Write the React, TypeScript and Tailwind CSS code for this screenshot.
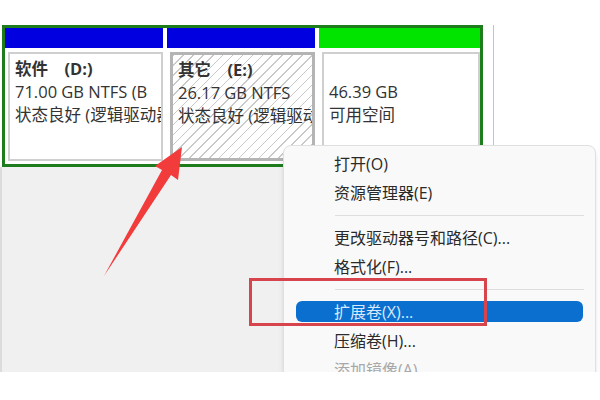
import React from 'react';

type Item = { label: string; sep?: boolean; active?: boolean; disabled?: boolean };

const menu: Item[] = [
  { label: '打开(O)' },
  { label: '资源管理器(E)' },
  { label: '', sep: true },
  { label: '更改驱动器号和路径(C)...' },
  { label: '格式化(F)...' },
  { label: '', sep: true },
  { label: '扩展卷(X)...', active: true },
  { label: '压缩卷(H)...' },
  { label: '添加镜像(A)', disabled: true },
];

function Partition({
  width,
  header,
  lines,
  hatched,
  selected,
}: {
  width: string;
  header: string;
  lines: { text: string; bold?: boolean }[];
  hatched?: boolean;
  selected?: boolean;
}) {
  return (
    <div className={`flex flex-col ${width}`}>
      <div className={`h-[20px] ${header}`} />
      <div className="flex-1 bg-white pt-[4px] pl-[3px] pb-[3px]">
        <div
          className={`h-full overflow-hidden pl-[5px] pt-[3px] ${
            selected ? 'border-[3px] border-[#b4b4b4]' : 'border-2 border-[#cfcfcf]'
          } ${
            hatched
              ? 'bg-[image:repeating-linear-gradient(135deg,#c9c9c9_0px,#c9c9c9_1px,#ffffff_1px,#ffffff_7px)]'
              : 'bg-white'
          }`}
        >
          {lines.map((l, i) => (
            <div
              key={i}
              className={`whitespace-pre h-[23px] leading-[23px] text-[16.5px] text-[#333] ${
                l.bold ? 'font-bold' : ''
              }`}
            >
              {l.text}
            </div>
          ))}
        </div>
      </div>
    </div>
  );
}

export default function App() {
  return (
    <div
      className="relative w-[600px] h-[400px] bg-white overflow-hidden"
      style={{ fontFamily: '"Open Sans", "Noto Sans CJK SC", sans-serif' }}
    >
      <div className="relative h-[372px] overflow-hidden">
        <div className="h-[25px]" />
        <div className="flex w-[494px] border-r border-[#c4c4c4] bg-white">
          <div className="flex ml-[2px] w-[481px] h-[142px] border-[3px] border-[#1d7d1d] gap-[4px] bg-white">
            <Partition
              width="w-[158px]"
              header="bg-[#0000e0]"
              lines={[
                { text: '软件\u3000(D:)', bold: true },
                { text: '71.00 GB NTFS (B' },
                { text: '状态良好 (逻辑驱动器)' },
              ]}
            />
            <Partition
              width="w-[148px]"
              header="bg-[#0000e0]"
              hatched
              selected
              lines={[
                { text: '其它\u3000(E:)', bold: true },
                { text: '26.17 GB NTFS' },
                { text: '状态良好 (逻辑驱动器)' },
              ]}
            />
            <Partition
              width="flex-1"
              header="bg-[#00e400]"
              lines={[{ text: '' }, { text: '46.39 GB' }, { text: '可用空间' }]}
            />
          </div>
        </div>
        <div className="w-[494px] h-full bg-[#f0f0f0] border-l-2 border-[#dcdcdc]" />

        {/* context menu */}
        <div className="absolute left-[283px] top-[145px] w-[313px] h-[260px] bg-[#f9f9f9] border border-[#e0e0e0] rounded-t-[8px] shadow-md pt-[3px]">
          {menu.map((m, i) =>
            m.sep ? (
              <div key={i} className="h-[16px] flex items-center pl-[51px] pr-[11px]">
                <div className="h-px w-full bg-[#dedede]" />
              </div>
            ) : (
              <div key={i} className="h-[29px] flex items-center px-[12px]">
                <div
                  className={`w-full h-[21px] flex items-center pl-[38px] rounded-[6px] text-[16px] whitespace-nowrap ${
                    m.active
                      ? 'bg-[#0a6fcf] text-[#d9e9fa]'
                      : m.disabled
                      ? 'text-[#a8a8a8]'
                      : 'text-[#2a2a2a]'
                  }`}
                >
                  {m.label}
                </div>
              </div>
            )
          )}
        </div>

        {/* annotations */}
        <div className="absolute left-[249px] top-[278px] w-[238px] h-[48px] border-[3px] border-[#d8444b]" />
        <svg className="absolute left-0 top-0" width="600" height="372" viewBox="0 0 600 372">
          <polygon
            points="182,147 155,166 162,170 104,276 171,175 178,180"
            fill="#f23c3c"
          />
        </svg>
      </div>
    </div>
  );
}
